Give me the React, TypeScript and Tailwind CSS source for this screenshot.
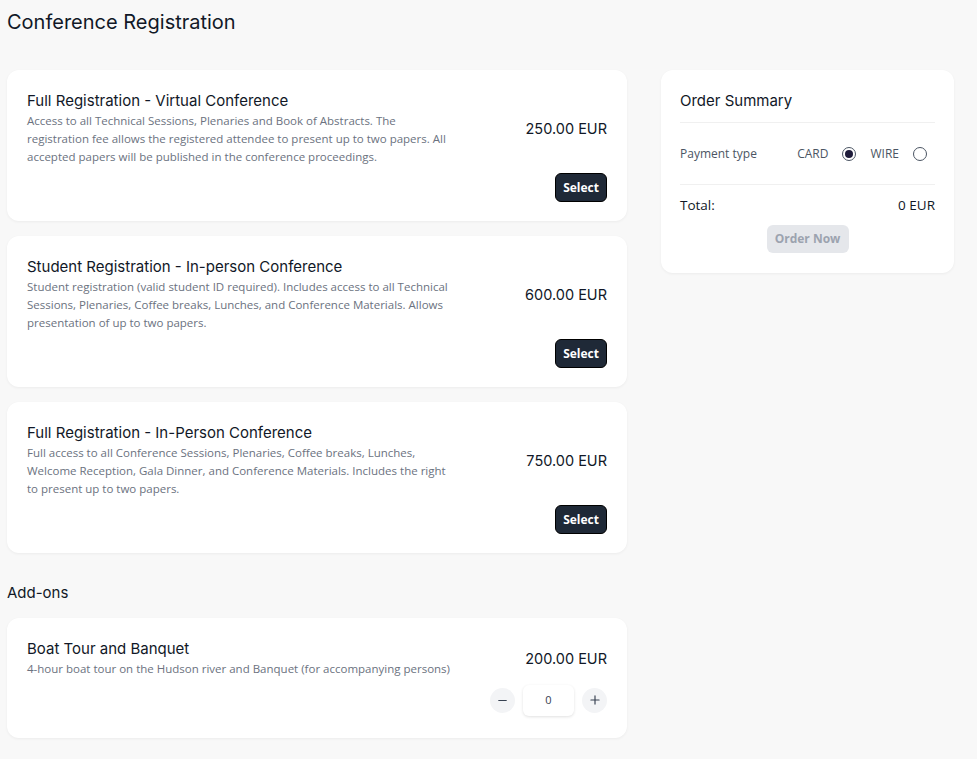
import React, { useState } from 'react';
import { Minus, Plus } from 'lucide-react';

const heading = { fontFamily: 'Inter, "Noto Sans", sans-serif' };
const body = { fontFamily: '"Open Sans", "Noto Sans", sans-serif' };

const packages = [
  {
    title: 'Full Registration - Virtual Conference',
    desc: 'Access to all Technical Sessions, Plenaries and Book of Abstracts. The registration fee allows the registered attendee to present up to two papers. All accepted papers will be published in the conference proceedings.',
    price: '250.00 EUR',
  },
  {
    title: 'Student Registration - In-person Conference',
    desc: 'Student registration (valid student ID required). Includes access to all Technical Sessions, Plenaries, Coffee breaks, Lunches, and Conference Materials. Allows presentation of up to two papers.',
    price: '600.00 EUR',
  },
  {
    title: 'Full Registration - In-Person Conference',
    desc: 'Full access to all Conference Sessions, Plenaries, Coffee breaks, Lunches, Welcome Reception, Gala Dinner, and Conference Materials. Includes the right to present up to two papers.',
    price: '750.00 EUR',
  },
];

const Radio = ({ checked }: { checked: boolean }) => (
  <span className="w-[14px] h-[14px] rounded-full border border-[#4b5563] flex items-center justify-center bg-white">
    {checked && <span className="w-[8px] h-[8px] rounded-full bg-[#1e1b3a]" />}
  </span>
);

const PackageCard = ({ title, desc, price }: any) => (
  <div className="bg-white rounded-xl shadow-[0_1px_3px_rgba(0,0,0,0.05)] h-[151px] px-5 pt-[21px] pb-[19px] flex justify-between">
    <div className="w-[432px]">
      <h3 className="text-[15px] leading-[20px] text-[#111827]" style={heading}>{title}</h3>
      <p className="text-[11.5px] leading-[18px] text-[#6b7280] mt-[1px]" style={body}>{desc}</p>
    </div>
    <div className="flex flex-col items-end justify-between">
      <div className="text-[14.5px] text-[#111827] mt-[27px]" style={heading}>{price}</div>
      <button className="bg-[#1f2937] text-white text-[12px] font-bold rounded-md h-[29px] px-[7px] border border-black" style={body}>
        Select
      </button>
    </div>
  </div>
);

export default function App() {
  const [payment] = useState('card');
  return (
    <div className="min-h-screen bg-[#f8f8f8] px-[7px] pt-[9px] pb-6">
      <h1 className="text-[20px] leading-[26px] text-[#111827]" style={heading}>Conference Registration</h1>
      <div className="flex gap-[34px] mt-[35px] items-start">
        <div className="w-[620px] flex flex-col gap-[15px]">
          {packages.map((p) => (
            <PackageCard key={p.title} {...p} />
          ))}
          <h2 className="text-[15px] text-[#111827] mt-[15px] leading-[20px]" style={heading}>Add-ons</h2>
          <div className="bg-white rounded-xl shadow-[0_1px_3px_rgba(0,0,0,0.05)] h-[120px] px-5 pt-[21px] flex justify-between">
            <div>
              <h3 className="text-[15px] leading-[20px] text-[#111827]" style={heading}>Boat Tour and Banquet</h3>
              <p className="text-[11.5px] leading-[18px] text-[#6b7280] mt-[1px]" style={body}>
                4-hour boat tour on the Hudson river and Banquet (for accompanying persons)
              </p>
            </div>
            <div className="flex flex-col items-end">
              <div className="text-[14.5px] text-[#111827] mt-[9px]" style={heading}>200.00 EUR</div>
              <div className="flex items-center gap-[8px] mt-[15px]">
                <button className="w-[25px] h-[25px] rounded-full bg-[#f3f4f6] flex items-center justify-center text-[#374151]">
                  <Minus size={13} strokeWidth={2} />
                </button>
                <div className="w-[51px] h-[31px] rounded-md bg-white shadow-[0_1px_3px_rgba(0,0,0,0.12)] flex items-center justify-center text-[11px] text-[#374151]" style={body}>
                  0
                </div>
                <button className="w-[25px] h-[25px] rounded-full bg-[#f3f4f6] flex items-center justify-center text-[#374151]">
                  <Plus size={14} strokeWidth={2} />
                </button>
              </div>
            </div>
          </div>
        </div>
        <div className="w-[293px] bg-white rounded-xl shadow-[0_1px_3px_rgba(0,0,0,0.05)] px-[19px] pt-[21px] h-[203px]">
          <h3 className="text-[15px] leading-[20px] text-[#111827]" style={heading}>Order Summary</h3>
          <div className="border-t border-[#f0f0f0] mt-[11px]" />
          <div className="flex items-center h-[61px] text-[12px] text-[#4b5563]" style={body}>
            <span>Payment type</span>
            <span className="ml-auto mr-[14px]">CARD</span>
            <Radio checked={payment === 'card'} />
            <span className="ml-[14px] mr-[14px]">WIRE</span>
            <span className="mr-[8px]"><Radio checked={payment === 'wire'} /></span>
          </div>
          <div className="border-t border-[#f0f0f0]" />
          <div className="flex justify-between mt-[10px] text-[13.5px] font-medium text-[#111827]" style={body}>
            <span>Total:</span>
            <span>0 EUR</span>
          </div>
          <div className="flex justify-center mt-[10px]">
            <button className="bg-[#e5e7eb] text-[#9ca3af] text-[12px] font-bold rounded-md h-[28px] w-[82px]" style={body}>
              Order Now
            </button>
          </div>
        </div>
      </div>
    </div>
  );
}
